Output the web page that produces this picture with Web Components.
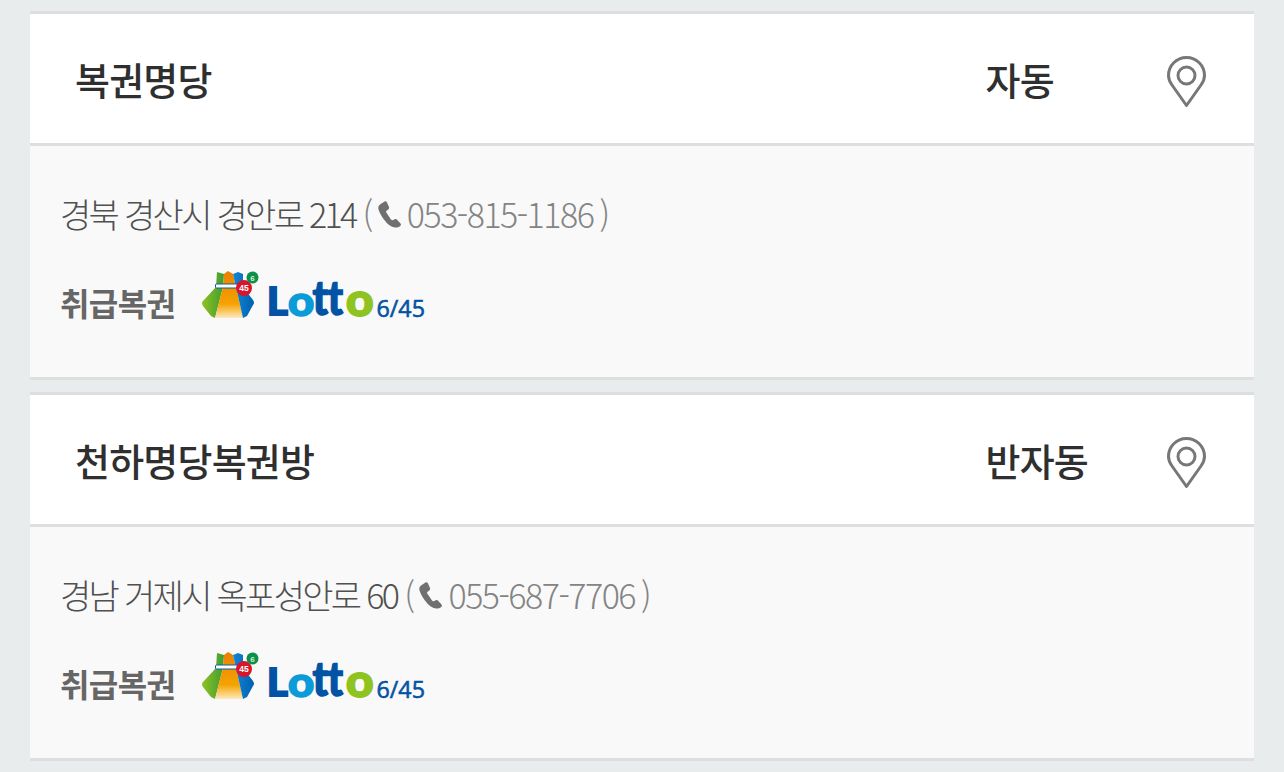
<!DOCTYPE html>
<html lang="ko"><head><meta charset="utf-8">
<style>
html,body{margin:0;padding:0;background:#e9eced;overflow:hidden}
body{height:772px;font-family:"Noto Sans CJK KR","Noto Sans",sans-serif}
main{display:flex;flex-direction:column;gap:12px;padding:11px 30px 0}
</style></head><body>
<template id="logo-t"><style>
:host{display:block;width:224px;height:52px}
svg{display:block;overflow:visible}
text.b{font-family:Lato,"Liberation Sans",sans-serif;font-weight:900}
</style>
<svg width="224" height="52" viewBox="0 0 224 52">
<defs>
<linearGradient id="gg" x1="0" y1="0" x2="1" y2="0"><stop offset="0" stop-color="#8fc31f"/><stop offset="1" stop-color="#3f9b35"/></linearGradient>
<linearGradient id="og" x1="0" y1="0" x2="0" y2="1"><stop offset="0" stop-color="#e97f00"/><stop offset=".7" stop-color="#f5a300"/><stop offset="1" stop-color="#fdeac0"/></linearGradient>
<linearGradient id="bg" x1="0" y1="0" x2="1" y2="0"><stop offset="0" stop-color="#1386d6"/><stop offset="1" stop-color="#0060b0"/></linearGradient>
</defs>
<path d="M15 2 L22 4 L21 17 L13 48 L9 46 L1 36 Q-1 33 1 31 L14 17Z" fill="url(#gg)"/>
<path d="M22 4 L26 1 L31 4 L34 17 L41 48 L13 48 L21 17Z" fill="url(#og)"/>
<path d="M31 4 L36 2 L41 4 L41 17 L51 30 Q53 33 51 35 L45 46 L41 48 L34 17Z" fill="url(#bg)"/>
<rect x="13.500" y="14" width="24" height="4" rx="1" fill="#fff" stroke="#0d5ea8" stroke-width="1"/>
<circle cx="42" cy="18" r="8" fill="#d8152b"/>
<text x="42" y="21" font-family="'Liberation Sans',sans-serif" font-size="8.500" font-weight="700" fill="#fff" text-anchor="middle">45</text>
<circle cx="50.500" cy="7.500" r="6" fill="#0b8f4d"/>
<text x="50.500" y="10.500" font-family="'Liberation Sans',sans-serif" font-size="8" font-weight="700" fill="#d7f0c0" text-anchor="middle">6</text>
<text class="b" transform="translate(65,45) scale(1.05,1)" font-size="38" fill="#0353a4" stroke="#0353a4" stroke-width="1.800">L</text>
<text class="b" transform="translate(86,46) scale(1.08,1)" font-size="42" fill="#0a9bd8" stroke="#0a9bd8" stroke-width="1.600">o</text>
<text class="b" transform="translate(110.500,45) scale(.88,1)" font-size="47" fill="#0353a4" stroke="#0353a4" stroke-width="1.400">t</text>
<text class="b" transform="translate(125.500,45) scale(.88,1)" font-size="47" fill="#0353a4" stroke="#0353a4" stroke-width="1.400">t</text>
<text class="b" transform="translate(144,46) scale(1.06,1)" font-size="45" fill="#8fc31f" stroke="#8fc31f" stroke-width="1.800">o</text>
<text transform="translate(174.500,47) scale(.97,1)" font-family="'Open Sans','Liberation Sans',sans-serif" font-size="24" font-weight="400" fill="#0353a4" stroke="#0353a4" stroke-width=".6">6/45</text>
</svg></template>

<template id="store-t"><style>
:host{display:block;background:#f9f9f9;border-top:3px solid #dedede;border-bottom:3px solid #dedede}
header{display:flex;align-items:center;height:129px;padding:0 47px 0 45px;background:#fff;border-bottom:3px solid #dedede;color:#2f2f2f;font-size:38px;font-weight:500;letter-spacing:-.8px}
.name{flex:1}
.area{width:181.500px}
.pin{display:block;width:40px;height:52px;margin-top:6px}
.body{height:231px;padding:0 30px;box-sizing:border-box;display:flex;flex-direction:column}
.addr{margin-top:48px;height:40px;line-height:40px;font-size:34px;font-weight:300;letter-spacing:-2.700px;color:#505050;white-space:nowrap;display:flex;align-items:center}
.addr .tel{color:#848484;letter-spacing:-1.500px;margin-left:7px;display:flex;align-items:center}
.addr .end{margin-left:6px}
.addr svg{margin:0 4px 0 5px}
.kind{display:flex;align-items:flex-start;margin-top:36px}
.kind b{font-size:32px;letter-spacing:-.6px;font-weight:700;color:#666;margin:8px 27px 0 0;line-height:48px}
</style>
<header><span class="name"><slot name="name"></slot></span><span class="area"><slot name="area"></slot></span>
<svg class="pin" viewBox="0 0 40 52" fill="none" stroke="#777" stroke-width="3"><path d="M19.500 49.500 L5 29 C2.500 25.500 1.500 22.500 1.500 19.500 C1.500 9.500 9.500 1.500 19.500 1.500 S37.500 9.500 37.500 19.500 C37.500 22.500 36.500 25.500 34 29Z" stroke-linejoin="round"/><circle cx="19.500" cy="19.500" r="8.500"/></svg>
</header>
<div class="body">
<div class="addr"><slot name="addr"></slot><span class="tel">(<svg width="26" height="28" viewBox="0 0 26 28"><path fill="#707070" d="M3 4.500 L7.500 1.500 C8.500 1 9.500 1.500 10 2.500 L12 7 C12.400 8 12 9 11.200 9.500 L9.300 11 C9 11.300 9 12 9.300 12.500 L14 19.500 C14.500 20.200 15 20.400 15.600 20.200 L17.800 19.200 C18.800 18.800 19.700 19.100 20.300 19.900 L23.500 23.600 C24.200 24.500 24 25.400 23.200 26 C20 28.500 15.500 28 11.500 24.500 C7 20.500 3 14 1.500 9.500 C1 7.500 1.500 5.500 3 4.500Z"/></svg><slot name="tel"></slot><span class="end">)</span></span></div>
<div class="kind"><b>취급복권</b><lotto-logo></lotto-logo></div>
</div></template>

<main>
<store-card><span slot="name">복권명당</span><span slot="area">자동</span><span slot="addr">경북 경산시 경안로 214</span><span slot="tel">053-815-1186</span></store-card>
<store-card><span slot="name">천하명당복권방</span><span slot="area">반자동</span><span slot="addr">경남 거제시 옥포성안로 60</span><span slot="tel">055-687-7706</span></store-card>
</main>
<script>
class LottoLogo extends HTMLElement{constructor(){super();this.attachShadow({mode:'open'}).append(document.getElementById('logo-t').content.cloneNode(true));}}
class StoreCard extends HTMLElement{constructor(){super();this.attachShadow({mode:'open'}).append(document.getElementById('store-t').content.cloneNode(true));}}
customElements.define('lotto-logo',LottoLogo);
customElements.define('store-card',StoreCard);
</script>
</body></html>
